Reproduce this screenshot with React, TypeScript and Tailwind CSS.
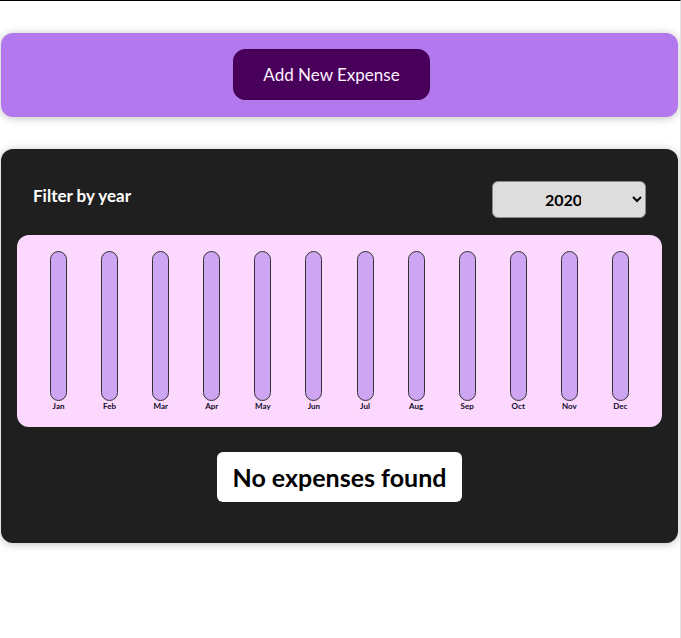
const months = ["Jan", "Feb", "Mar", "Apr", "May", "Jun", "Jul", "Aug", "Sep", "Oct", "Nov", "Dec"];

function ChartBar({ label }: { label: string }) {
  return (
    <div className="flex h-full w-[17px] flex-col items-center">
      <div className="flex h-[150px] w-full flex-col justify-end overflow-hidden rounded-xl border border-[#313131] bg-[#cea5f2]" />
      <div className="mt-[1px] text-center text-[8px] font-bold leading-[9px] text-[#0d0b1e]">{label}</div>
    </div>
  );
}

export default function App() {
  return (
    <div
      className="h-[638px] w-[681px] overflow-hidden border-t border-r border-t-black border-r-[#e2e2e2] bg-white"
      style={{ fontFamily: "Lato, 'Noto Sans', sans-serif" }}
    >
      <div className="mt-8 mr-[2px] ml-px flex justify-center rounded-xl bg-[#b478ee] pt-4 pb-[17px] shadow-[0_1px_8px_rgba(0,0,0,0.25)]">
        <button className="mr-4 h-[51px] w-[197px] rounded-xl border border-[#40004f] bg-[#48005a] text-[17px] text-[#fff0ff]">
          Add New Expense
        </button>
      </div>

      <div className="mt-8 mr-[2px] ml-px rounded-xl bg-[#1f1f1f] p-4 shadow-[0_1px_8px_rgba(0,0,0,0.25)]">
        <div className="mt-4 mb-[17px] flex items-center justify-between px-4 text-white">
          <label className="-mt-[7px] text-[17px] font-bold">Filter by year</label>
          <select
            defaultValue="2020"
            className="h-[37px] w-[154px] rounded-md border border-[#8a8a8a] bg-[#dddddd] px-12 text-base font-bold text-black"
          >
            <option value="2022">2022</option>
            <option value="2021">2021</option>
            <option value="2020">2020</option>
            <option value="2019">2019</option>
          </select>
        </div>

        <div className="flex h-[192px] justify-around rounded-xl bg-[#fcd8fe] px-4 py-4">
          {months.map((m) => (
            <ChartBar key={m} label={m} />
          ))}
        </div>

        <div className="my-[25px] flex justify-center">
          <h2 className="h-[50px] w-[245px] rounded-md bg-white text-center text-[25px] leading-[50px] font-bold text-black">
            No expenses found
          </h2>
        </div>
      </div>
    </div>
  );
}
